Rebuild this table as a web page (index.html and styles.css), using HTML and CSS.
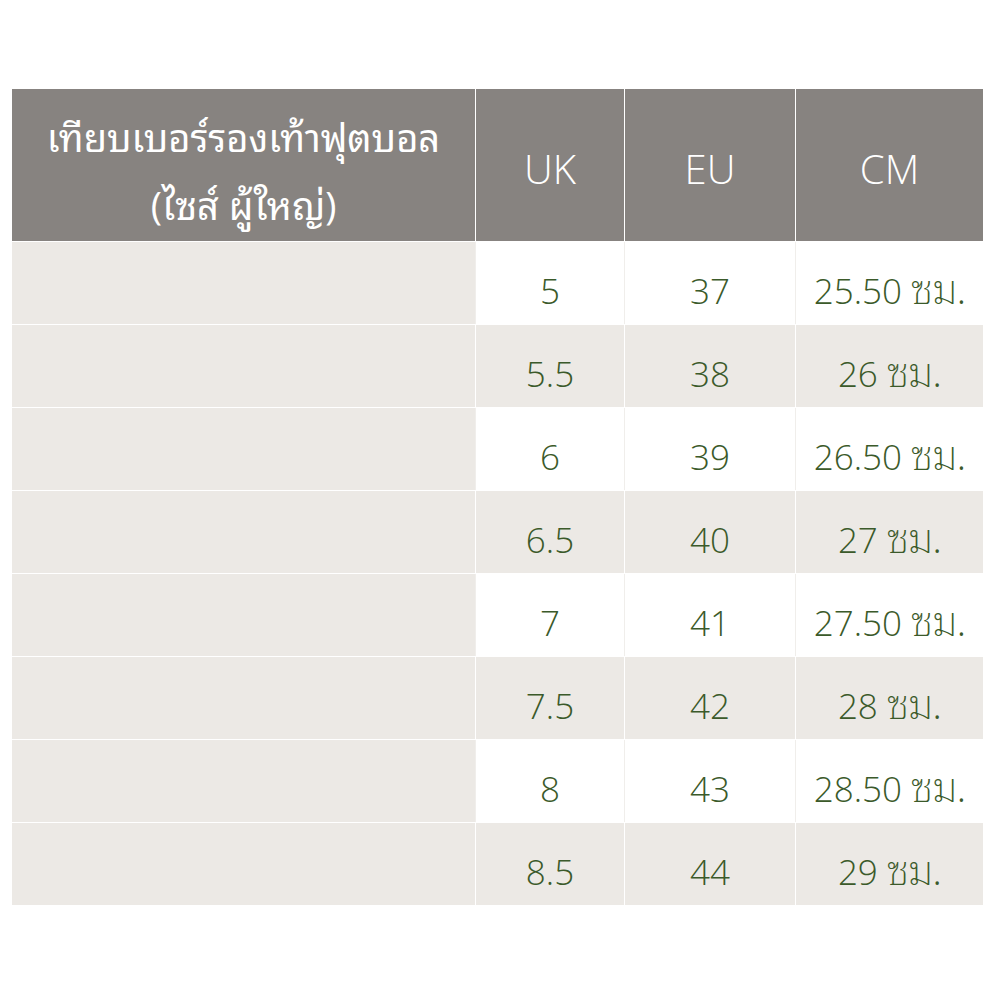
FILE: index.html
```html
<!DOCTYPE html>
<html lang="th">
<head>
<meta charset="utf-8">
<title>เทียบเบอร์รองเท้าฟุตบอล</title>
<link rel="stylesheet" href="styles.css">
</head>
<body>
<div class="page">
  <div class="table">
    <div class="cell head title">เทียบเบอร์รองเท้าฟุตบอล<br>(ไซส์ ผู้ใหญ่)</div>
    <div class="cell head">UK</div>
    <div class="cell head">EU</div>
    <div class="cell head">CM</div>

    <div class="cell blank"></div><div class="cell w">5</div><div class="cell w">37</div><div class="cell w"><span>25.50 <span class="unit">ซม.</span></span></div>
    <div class="cell blank"></div><div class="cell g">5.5</div><div class="cell g">38</div><div class="cell g"><span>26 <span class="unit">ซม.</span></span></div>
    <div class="cell blank"></div><div class="cell w">6</div><div class="cell w">39</div><div class="cell w"><span>26.50 <span class="unit">ซม.</span></span></div>
    <div class="cell blank"></div><div class="cell g">6.5</div><div class="cell g">40</div><div class="cell g"><span>27 <span class="unit">ซม.</span></span></div>
    <div class="cell blank"></div><div class="cell w">7</div><div class="cell w">41</div><div class="cell w"><span>27.50 <span class="unit">ซม.</span></span></div>
    <div class="cell blank"></div><div class="cell g">7.5</div><div class="cell g">42</div><div class="cell g"><span>28 <span class="unit">ซม.</span></span></div>
    <div class="cell blank"></div><div class="cell w">8</div><div class="cell w">43</div><div class="cell w"><span>28.50 <span class="unit">ซม.</span></span></div>
    <div class="cell blank"></div><div class="cell g">8.5</div><div class="cell g">44</div><div class="cell g"><span>29 <span class="unit">ซม.</span></span></div>
  </div>
</div>
</body>
</html>
```

FILE: styles.css
```css
html, body {
  margin: 0;
  padding: 0;
  background: #ffffff;
}
.page {
  padding: 89px 0 0 12px;
}
.table {
  display: grid;
  grid-template-columns: 463px 148px 170px 187px;
  grid-template-rows: 152px repeat(8, 82px);
  gap: 1px;
  width: 971px;
  background: #ffffff;
  font-family: "Open Sans", "Noto Sans Thai Looped", "Noto Sans Thai", "Noto Sans", sans-serif;
}
.cell {
  display: flex;
  align-items: center;
  justify-content: center;
  text-align: center;
  white-space: pre;
}
.head {
  background: #878380;
  color: #ffffff;
  font-size: 40px;
  font-weight: 300;
  padding-top: 6px;
}
.title {
  font-size: 38px;
  font-weight: 400;
  line-height: 68px;
  padding-top: 12px;
  white-space: normal;
}
.blank {
  background: #ece9e5;
}
.w, .g {
  color: #3b5a2a;
  font-size: 35px;
  font-weight: 300;
  line-height: 48px;
  padding-top: 16px;
}
.unit {
  font-size: 41px;
  font-weight: 200;
  line-height: 0;
  letter-spacing: -1px;
}
.w {
  background: #ffffff;
  box-shadow: -1px 0 0 #f0eeeb;
}
.g {
  background: #ece9e5;
}
```
